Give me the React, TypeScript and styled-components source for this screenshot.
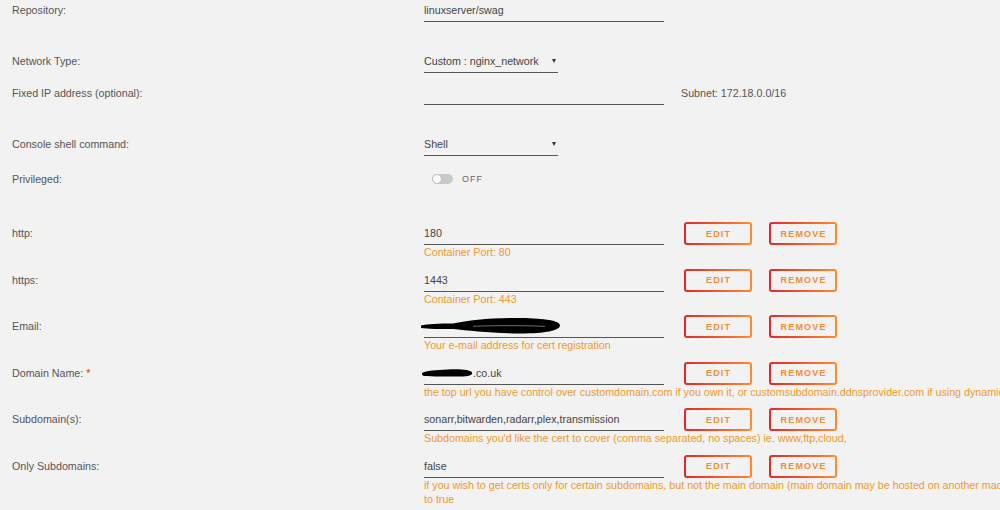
import React from "react";
import styled, { createGlobalStyle } from "styled-components";

const GlobalStyle = createGlobalStyle`
  html, body {
    margin: 0;
    padding: 0;
    background: #f2f2f2;
    overflow: hidden;
  }
`;

type Config = {
  label: string;
  value: React.ReactNode;
  hint: React.ReactNode;
  required?: boolean;
};

const EmailScribble = () => (
  <svg width="140" height="18" viewBox="0 0 140 18" style={{ marginLeft: -3, marginTop: -1 }}>
    <path
      d="M0,8.5 C6,7 18,6.5 32,6.5 C48,3 72,0.5 100,1 C124,1.5 139,3.5 139,8.5 C139,13.5 124,16.5 100,16.5 C72,16.5 48,13.5 32,12 C20,12 6,12 0,11 Z"
      fill="#000"
    />
    <path d="M52,9.3 C78,8.4 104,8.4 124,9.4" stroke="#9a9a9a" strokeWidth="0.7" fill="none" />
  </svg>
);

const DomainScribble = () => (
  <svg width="51" height="10" viewBox="0 0 51 10" style={{ marginLeft: -2 }}>
    <path
      d="M0,5 C4,2.5 14,2 26,1.5 C38,1 48,1.5 50,4.5 C51,7.5 46,8.8 36,8.6 C24,8.4 10,8.6 2,8 C0,7.5 0,6 0,5 Z"
      fill="#000"
    />
  </svg>
);

const configs: Config[] = [
  { label: "http:", value: "180", hint: "Container Port: 80" },
  { label: "https:", value: "1443", hint: "Container Port: 443" },
  {
    label: "Email:",
    value: <EmailScribble />,
    hint: "Your e-mail address for cert registration",
  },
  {
    label: "Domain Name:",
    required: true,
    value: (
      <>
        <DomainScribble />
        .co.uk
      </>
    ),
    hint: "the top url you have control over customdomain.com if you own it, or customsubdomain.ddnsprovider.com if using dynamic dns",
  },
  {
    label: "Subdomain(s):",
    value: "sonarr,bitwarden,radarr,plex,transmission",
    hint: "Subdomains you'd like the cert to cover (comma separated, no spaces) ie. www,ftp,cloud,",
  },
  {
    label: "Only Subdomains:",
    value: "false",
    hint: (
      <>
        if you wish to get certs only for certain subdomains, but not the main domain (main domain may be
        hosted on another machine and cannot be validated), set this
        <br />
        to true
      </>
    ),
  },
];

export default function App() {
  return (
    <>
      <GlobalStyle />
      <Form>
        <Row $h={51}>
          <Label>Repository:</Label>
          <Field>linuxserver/swag</Field>
        </Row>
        <Row $h={32}>
          <Label>Network Type:</Label>
          <Select>Custom : nginx_network</Select>
        </Row>
        <Row $h={51}>
          <Label>Fixed IP address (optional):</Label>
          <Field />
          <Side>Subnet: 172.18.0.0/16</Side>
        </Row>
        <Row $h={35}>
          <Label>Console shell command:</Label>
          <Select>Shell</Select>
        </Row>
        <Row $h={54}>
          <Label>Privileged:</Label>
          <SwitchWrap>
            <Track>
              <Knob />
            </Track>
            <SwitchText>OFF</SwitchText>
          </SwitchWrap>
        </Row>
        {configs.map((c) => (
          <Row $h={46.5} key={c.label}>
            <Label>
              {c.label}
              {c.required && <Required> *</Required>}
            </Label>
            <div>
              <Field>{c.value}</Field>
              <Hint>{c.hint}</Hint>
            </div>
            <Buttons>
              <GradButton>EDIT</GradButton>
              <GradButton>REMOVE</GradButton>
            </Buttons>
          </Row>
        ))}
      </Form>
    </>
  );
}

const Form = styled.div`
  box-sizing: border-box;
  width: 1000px;
  height: 510px;
  overflow: hidden;
  padding: 2px 0 0 12px;
  font-family: "Liberation Sans", Arial, sans-serif;
  font-size: 10.7px;
  line-height: 16px;
  color: #555;
`;

const Row = styled.div<{ $h: number }>`
  display: grid;
  grid-template-columns: 412px 240px auto;
  align-items: start;
  height: ${(p) => p.$h}px;
`;

const Label = styled.div`
  color: #555;
  white-space: nowrap;
`;

const Required = styled.span`
  color: #e22828;
`;

const Field = styled.div`
  display: flex;
  align-items: center;
  box-sizing: border-box;
  width: 240px;
  height: 20px;
  padding-bottom: 3px;
  border-bottom: 1px solid #555;
  color: #444;
  white-space: nowrap;
`;

const Select = styled(Field)`
  width: 134px;
  justify-content: space-between;
  &::after {
    content: "";
    margin-right: 2px;
    border-left: 2.5px solid transparent;
    border-right: 2.5px solid transparent;
    border-top: 4.5px solid #333;
  }
`;

const Side = styled.div`
  margin-left: 17px;
  color: #555;
  white-space: nowrap;
`;

const Hint = styled.div`
  color: #ee9a2c;
  line-height: 14px;
  white-space: nowrap;
`;

const Buttons = styled.div`
  display: flex;
  gap: 17px;
  margin: -3px 0 0 20px;
`;

const GradButton = styled.button`
  box-sizing: border-box;
  width: 68px;
  height: 23px;
  padding: 0 0 0 1.2px;
  border: 2px solid transparent;
  border-radius: 3px;
  background: linear-gradient(#f2f2f2, #f2f2f2) padding-box,
    linear-gradient(90deg, #e22828, #ff8c2f) border-box;
  color: #f98a35;
  font-family: "Liberation Sans", Arial, sans-serif;
  font-weight: bold;
  font-size: 9px;
  letter-spacing: 1.2px;
  cursor: pointer;
`;

const SwitchWrap = styled.div`
  display: flex;
  align-items: center;
  gap: 9px;
  height: 16px;
  padding-left: 8px;
`;

const Track = styled.div`
  display: flex;
  align-items: center;
  width: 21px;
  height: 10px;
  border-radius: 5px;
  background: #c9c9c9;
`;

const Knob = styled.div`
  box-sizing: border-box;
  width: 10px;
  height: 10px;
  border-radius: 50%;
  background: #fff;
  border: 1px solid #bdbdbd;
`;

const SwitchText = styled.span`
  font-size: 9px;
  letter-spacing: 1px;
  color: #666;
`;
